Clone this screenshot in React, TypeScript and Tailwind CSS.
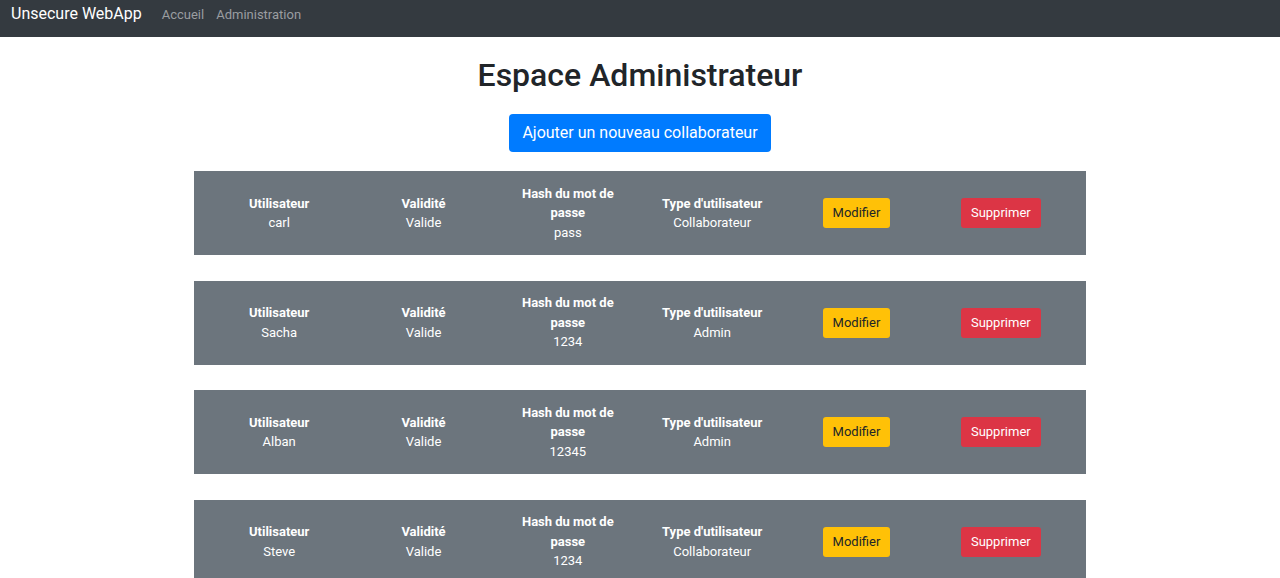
type User = {
  name: string,
  validity: string,
  hash: string,
  type: string,
}

const users: Array<User> = [
  { name: 'carl', validity: 'Valide', hash: 'pass', type: 'Collaborateur' },
  { name: 'Sacha', validity: 'Valide', hash: '1234', type: 'Admin' },
  { name: 'Alban', validity: 'Valide', hash: '12345', type: 'Admin' },
  { name: 'Steve', validity: 'Valide', hash: '1234', type: 'Collaborateur' },
]

const Cell = ({ label, value }: { label: string, value: string }) => (
  <div className="flex flex-col items-center justify-center text-center">
    <span className="font-bold">{label}</span>
    <span>{value}</span>
  </div>
)

const App = () => (
  <div className="min-h-screen bg-white font-['Roboto',sans-serif] text-[#212529]">
    <nav className="flex h-[37px] items-baseline bg-[#343a40] px-[11px] pt-[2px]">
      <span className="mr-[20px] text-[16px] leading-[24px] text-white">Unsecure WebApp</span>
      <div className="flex gap-[12px] text-[13px] leading-[24px] text-[#9a9da0]">
        <a>Accueil</a>
        <a>Administration</a>
      </div>
    </nav>

    <main className="flex flex-col items-center">
      <h1 className="mt-[18px] text-[32px] font-medium leading-[40px]">Espace Administrateur</h1>
      <button className="mt-[19px] h-[38px] rounded-[4px] bg-[#007bff] px-[13px] text-[16px] text-white">
        Ajouter un nouveau collaborateur
      </button>

      <div className="mt-[19px] flex w-[892px] flex-col gap-[25.5px]">
        {users.map((u) => (
          <div key={u.name} className="grid h-[84px] grid-cols-6 items-center bg-[#6c757d] px-[13px] text-[13px] leading-[19.5px] text-white">
            <Cell label="Utilisateur" value={u.name} />
            <Cell label="Validité" value={u.validity} />
            <div className="flex flex-col items-center justify-center text-center">
              <span className="font-bold">Hash du mot de</span>
              <span className="font-bold">passe</span>
              <span>{u.hash}</span>
            </div>
            <Cell label="Type d'utilisateur" value={u.type} />
            <div className="flex items-center justify-center">
              <button className="h-[30px] rounded-[3px] bg-[#ffc107] px-[10px] text-[13px] text-[#212529]">Modifier</button>
            </div>
            <div className="flex items-center justify-center">
              <button className="h-[30px] rounded-[3px] bg-[#dc3545] px-[10px] text-[13px] text-white">Supprimer</button>
            </div>
          </div>
        ))}
      </div>
    </main>
  </div>
)

export default App
